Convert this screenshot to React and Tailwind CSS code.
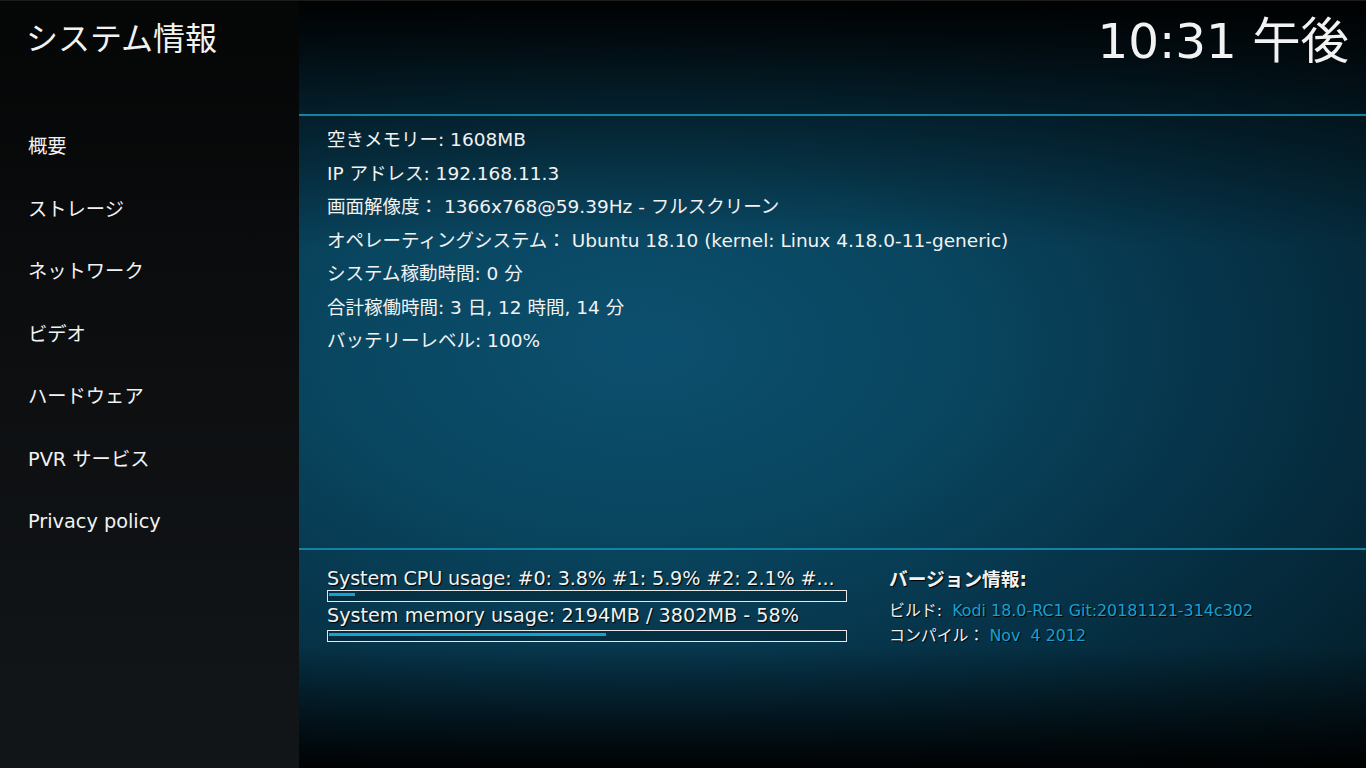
import React from "react";

const menu = ["概要", "ストレージ", "ネットワーク", "ビデオ", "ハードウェア", "PVR サービス", "Privacy policy"];

const info = [
  "空きメモリー: 1608MB",
  "IP アドレス: 192.168.11.3",
  "画面解像度： 1366x768@59.39Hz - フルスクリーン",
  "オペレーティングシステム： Ubuntu 18.10 (kernel: Linux 4.18.0-11-generic)",
  "システム稼動時間: 0 分",
  "合計稼働時間: 3 日, 12 時間, 14 分",
  "バッテリーレベル: 100%",
];

function Bar({ fill }) {
  return (
    <div className="w-[520px] h-[12px] border border-[#e8e8e8] bg-[#04202c]/40 pt-[2px] px-[1px]">
      <div className="h-[3px] bg-[#12a3d2]" style={{ width: fill }} />
    </div>
  );
}

export default function App() {
  return (
    <div
      className="w-[1366px] h-[768px] flex flex-col overflow-hidden text-[#f2f2f2]"
      style={{ fontFamily: '"DejaVu Sans", "Noto Sans CJK JP", sans-serif' }}
    >
      <div className="h-[1px] bg-[#1c1c1c] shrink-0" />
      <div className="flex flex-1 min-h-0">
        {/* Sidebar */}
        <aside className="w-[299px] shrink-0 flex flex-col bg-gradient-to-b from-[#050606] via-[#0d0f11] to-[#121619]">
          <div className="h-[115px] shrink-0 pl-[26px] pt-[18px]">
            <div className="text-[32px] leading-[34px]" style={{ fontFamily: '"Noto Sans CJK JP", sans-serif' }}>
              システム情報
            </div>
          </div>
          <nav className="flex flex-col">
            {menu.map((m) => (
              <div key={m} className="h-[62.5px] flex items-center pl-[28px] text-[19.3px] leading-[22px]">
                {m}
              </div>
            ))}
          </nav>
        </aside>

        {/* Main */}
        <main className="flex-1 flex flex-col [background-image:linear-gradient(180deg,rgba(0,0,0,0.97)_0%,rgba(0,0,0,0.55)_12%,rgba(0,0,0,0)_32%,rgba(0,0,0,0)_84%,rgba(0,0,0,0.95)_100%),radial-gradient(ellipse_at_32%_45%,#0c4f6e_0%,#094660_30%,#063247_60%,#031a24_100%)]">
          <header className="h-[113px] shrink-0 flex justify-end pr-[17px] pt-[12px]">
            <div className="text-[48.4px] leading-[56px]">10:31 午後</div>
          </header>
          <div className="h-[2px] shrink-0 bg-[#1282a5]" />
          <section className="h-[432px] shrink-0 pl-[28px] pt-[7px]">
            {info.map((t) => (
              <div key={t} className="text-[18.5px] leading-[33.5px] whitespace-pre">
                {t}
              </div>
            ))}
          </section>
          <div className="h-[2px] shrink-0 bg-[#1282a5]" />
          <section className="flex pl-[28px] pt-[18px] [text-shadow:1px_1px_1px_#000]">
            <div className="w-[520px] flex flex-col">
              <div className="text-[19.2px] leading-[22px] whitespace-pre tracking-[-0.15px]">System CPU usage: #0: 3.8% #1: 5.9% #2: 2.1% #...</div>
              <div className="mt-[0px]">
                <Bar fill="26px" />
              </div>
              <div className="text-[19.2px] leading-[22px] mt-[3px] whitespace-pre">System memory usage: 2194MB / 3802MB - 58%</div>
              <div className="mt-[3px]">
                <Bar fill="277px" />
              </div>
            </div>
            <div className="ml-[42px] flex flex-col">
              <div className="text-[18.7px] leading-[24px] font-bold">バージョン情報:</div>
              <div className="text-[15.9px] leading-[25px] mt-[6px] whitespace-pre">
                ビルド:  <span className="text-[#17a0d3]">Kodi 18.0-RC1 Git:20181121-314c302</span>
              </div>
              <div className="text-[15.9px] leading-[25px] whitespace-pre">
                コンパイル： <span className="text-[#17a0d3]">Nov  4 2012</span>
              </div>
            </div>
          </section>
        </main>
      </div>
    </div>
  );
}
